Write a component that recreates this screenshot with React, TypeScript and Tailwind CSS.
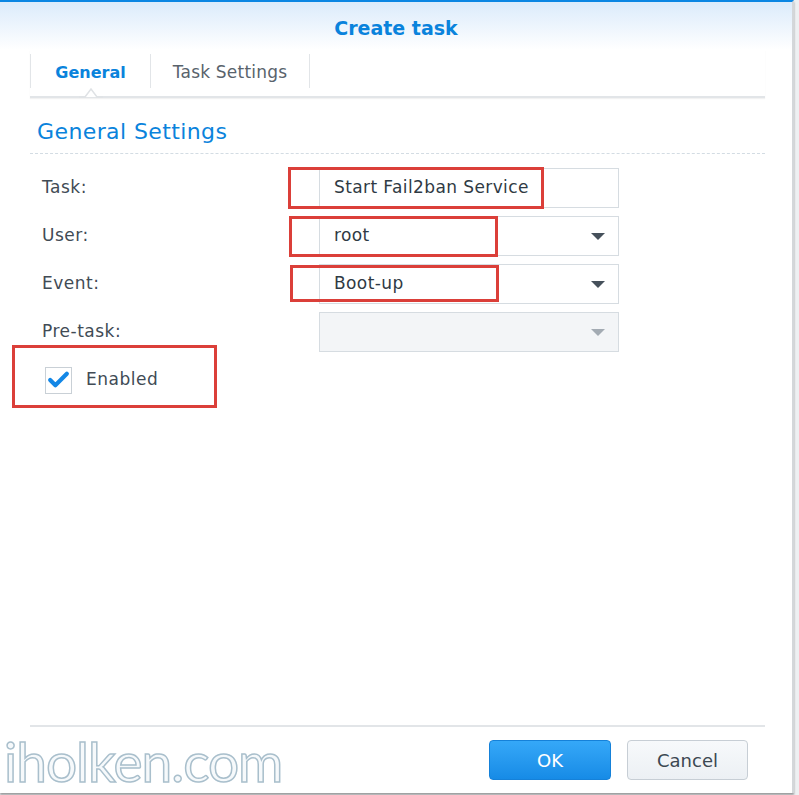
import { Check } from "lucide-react";

const FIELDS = [
  { label: "Task:", value: "Start Fail2ban Service", select: false, disabled: false },
  { label: "User:", value: "root", select: true, disabled: false },
  { label: "Event:", value: "Boot-up", select: true, disabled: false },
  { label: "Pre-task:", value: "", select: true, disabled: true },
];

// red annotation boxes drawn over the screenshot
const MARKS = [
  "left-[288px] top-[167px] w-[256px] h-[42px]",
  "left-[289px] top-[216px] w-[209px] h-[41px]",
  "left-[290px] top-[265px] w-[209px] h-[37px]",
  "left-[12px] top-[345px] w-[205px] h-[63px]",
];

function Caret({ disabled }: { disabled: boolean }) {
  return (
    <svg width="16" height="9" viewBox="0 0 16 9" className="shrink-0">
      <path d="M1 1h14L8 8z" fill={disabled ? "#a3abb3" : "#46515b"} />
    </svg>
  );
}

export default function App() {
  return (
    <div className="relative w-[799px] h-[795px] overflow-hidden bg-[#eef0f2] font-['DejaVu_Sans',sans-serif]">
      <div className="flex flex-col w-[794px] h-[793px] bg-white border-t-2 border-r-2 border-t-[#0b86e3] border-r-[#d4d7da] shadow-[0_2px_2px_rgba(0,0,0,0.35)]">
        <header className="h-[48px] shrink-0 flex items-center justify-center bg-gradient-to-b from-[#dbebfb] to-white">
          <h1 className="text-[19px] font-bold text-[#0a83dc] pt-[4px]">Create task</h1>
        </header>

        <div className="mx-[30px] w-[735px] flex flex-col flex-1">
          <nav className="relative h-[48px] shrink-0 flex items-stretch border-b-2 border-[#e2e5e8] shadow-[0_1px_1px_rgba(0,0,0,0.05)]">
            <div className="relative w-[121px] flex items-center justify-center border-l border-r border-[#e2e5e8] my-[4px] mb-[8px] pt-[4px]">
              <span className="text-[16px] font-bold text-[#0a83dc]">General</span>
              <svg width="24" height="12" viewBox="0 0 24 12" className="absolute left-[48px] -bottom-[10px]">
                <path d="M0 11h6l6-8 6 8h6" fill="white" stroke="#dfe2e5" strokeWidth="1.5" />
              </svg>
            </div>
            <div className="w-[159px] flex items-center justify-center border-r border-[#e2e5e8] my-[4px] mb-[8px] pt-[4px]">
              <span className="text-[17px] tracking-[0.2px] text-[#59636c]">Task Settings</span>
            </div>
          </nav>

          <h2 className="mt-[20px] ml-[7px] text-[22px] tracking-[0.4px] leading-[28px] text-[#0a83dc]">General Settings</h2>
          <div className="mt-[7px] border-b border-dashed border-[#d3dce3]" />

          <div className="mt-[14px] flex flex-col gap-[8px]">
            {FIELDS.map((f) => (
              <div key={f.label} className="flex items-center h-[40px]">
                <span className="w-[289px] pl-[12px] text-[17px] tracking-[0.5px] text-[#414b55]">{f.label}</span>
                <div
                  className={`w-[300px] h-[40px] flex items-center justify-between pl-[14px] pr-[12px] border border-[#d6dce1] ${
                    f.disabled ? "bg-[#f3f5f7]" : "bg-white"
                  }`}
                >
                  <span className="text-[17px] tracking-[0.4px] text-[#2f3a44]">{f.value}</span>
                  {f.select && <Caret disabled={f.disabled} />}
                </div>
              </div>
            ))}
          </div>

          <label className="mt-[14px] ml-[15px] flex items-center gap-[14px] h-[28px]">
            <span className="w-[27px] h-[27px] border border-[#c9d0d6] bg-white flex items-center justify-center">
              <Check className="w-[26px] h-[26px] text-[#1387e6]" strokeWidth={4} />
            </span>
            <span className="text-[17px] tracking-[0.5px] text-[#414b55]">Enabled</span>
          </label>

          <div className="mt-auto border-t-2 border-[#e2e5e8] h-[68px] flex items-start justify-end gap-[16px] pt-[13px] pr-[17px]">
            <button className="w-[122px] h-[40px] rounded-[4px] bg-gradient-to-b from-[#35a8f8] to-[#168be6] border border-[#1581d9] text-white text-[18px]">
              OK
            </button>
            <button className="w-[121px] h-[40px] rounded-[4px] bg-gradient-to-b from-[#f7f9fb] to-[#ecf0f4] border border-[#c7ced5] text-[#3c4852] text-[18px]">
              Cancel
            </button>
          </div>
        </div>
      </div>

      {MARKS.map((m) => (
        <div key={m} className={`absolute border-[3px] border-[#db3f39] pointer-events-none ${m}`} />
      ))}

      <div className="absolute left-[4px] top-[729px] text-[55px] leading-[64px] font-['Lato',sans-serif] text-[#f6f9fb] [-webkit-text-stroke:1.5px_#a9bfcc] tracking-[-1px]">
        iholken.com
      </div>
    </div>
  );
}
